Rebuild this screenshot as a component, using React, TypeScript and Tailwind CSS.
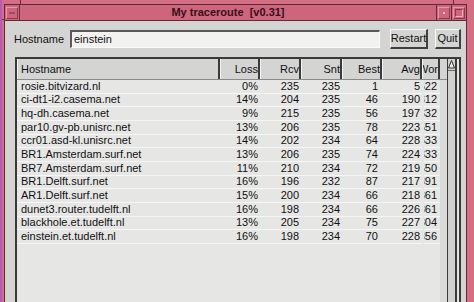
import React from "react";

type Row = [string, string, string, string, string, string, string];

const rows: Row[] = [
  ["rosie.bitvizard.nl", "0%", "235", "235", "1", "5", "522"],
  ["ci-dt1-i2.casema.net", "14%", "204", "235", "46", "190", "312"],
  ["hq-dh.casema.net", "9%", "215", "235", "56", "197", "332"],
  ["par10.gv-pb.unisrc.net", "13%", "206", "235", "78", "223", "551"],
  ["ccr01.asd-kl.unisrc.net", "14%", "202", "234", "64", "228", "633"],
  ["BR1.Amsterdam.surf.net", "13%", "206", "235", "74", "224", "333"],
  ["BR7.Amsterdam.surf.net", "11%", "210", "234", "72", "219", "550"],
  ["BR1.Delft.surf.net", "16%", "196", "232", "87", "217", "391"],
  ["AR1.Delft.surf.net", "15%", "200", "234", "66", "218", "361"],
  ["dunet3.router.tudelft.nl", "16%", "198", "234", "66", "226", "361"],
  ["blackhole.et.tudelft.nl", "13%", "205", "234", "75", "227", "304"],
  ["einstein.et.tudelft.nl", "16%", "198", "234", "70", "228", "356"],
];

const widths = ["w-[40px]", "w-[41px]", "w-[41px]", "w-[40px]", "w-[40px]"];
const heads = ["Loss", "Rcv", "Snt", "Best", "Avg"];

function HeadCell({ w, label }: { w: string; label: string }) {
  return (
    <div
      className={`${w} h-full shrink-0 flex items-center justify-end overflow-hidden border-l border-l-[#f4f4f4] border-r-2 border-r-[#3a3a3a] bg-[#d4d4d2]`}
    >
      <span className="shrink-0">{label}</span>
    </div>
  );
}

export default function App() {
  return (
    <div className="w-[474px] h-[302px] overflow-hidden bg-[#b45cb4] pl-[2px] flex font-['Liberation_Sans',Arial,sans-serif] text-[11px] text-[#111]">
      <div className="flex-1 flex flex-col bg-[#d46e84] pt-[4px] pl-[2px] pr-[7px] relative">
        {/* corner handle marks */}
        <div className="absolute left-[18px] top-0 w-px h-[5px] bg-[#6a2c3a]" />
        <div className="absolute left-[451px] top-0 w-px h-[5px] bg-[#6a2c3a]" />
        <div className="absolute left-0 top-[19px] w-[3px] h-px bg-[#6a2c3a]" />
        <div className="flex-1 flex flex-col border-l border-t border-r border-[#5e2a36]">
          {/* title bar */}
          <div className="h-[15px] flex bg-[#cd667c] border-b border-[#5e2a36] box-content">
            <div className="w-[15px] h-full border-r border-r-[#6a2c3a] flex items-center justify-center">
              <div className="w-[12px] h-[12px] border-t border-l border-[#e898a8] border-r border-b border-r-[#8a3c4c] border-b-[#8a3c4c] flex items-center justify-center">
                <div className="w-[6px] h-[2px] bg-[#a24a5e]" />
              </div>
            </div>
            <div className="flex-1 flex items-center justify-center font-bold text-[11px] text-[#3a0e18] whitespace-pre leading-none">
              My traceroute  [v0.31]
            </div>
            <div className="w-[15px] h-full border-l border-l-[#6a2c3a] flex items-center justify-center">
              <div className="w-[12px] h-[12px] border-t border-l border-[#e898a8] border-r border-b border-r-[#8a3c4c] border-b-[#8a3c4c] flex items-center justify-center">
                <div className="w-[2px] h-[2px] bg-[#f0c0c8]" />
              </div>
            </div>
            <div className="w-[15px] h-full border-l border-l-[#6a2c3a] flex items-center justify-center">
              <div className="w-[12px] h-[12px] border-t border-l border-[#e898a8] border-r border-b border-r-[#8a3c4c] border-b-[#8a3c4c] flex items-center justify-center">
                <div className="w-[8px] h-[8px] border border-t-[#8a3c4c] border-l-[#8a3c4c] border-r-[#f0b0bc] border-b-[#f0b0bc]" />
              </div>
            </div>
          </div>

          {/* body */}
          <div className="flex-1 flex flex-col bg-[#d4d4d2] pt-[8px]">
            <div className="flex items-center h-[20px] pl-[9px]">
              <div className="w-[56px] shrink-0 text-[11px]">Hostname</div>
              <div className="w-[310px] h-[18px] shrink-0 bg-[#f2f2f0] border-t-2 border-l-2 border-t-[#5a5a5a] border-l-[#5a5a5a] border-b border-r border-b-[#fafafa] border-r-[#fafafa] flex items-center pl-[2px]">
                einstein
              </div>
              <div className="ml-[10px] w-[38px] h-[20px] shrink-0 bg-[#d4d4d2] border-t border-l border-t-[#f8f8f8] border-l-[#f8f8f8] border-b-2 border-r-2 border-b-[#404040] border-r-[#404040] flex items-center justify-center">
                Restart
              </div>
              <div className="ml-[7px] w-[26px] h-[20px] shrink-0 bg-[#d4d4d2] border-t border-l border-t-[#f8f8f8] border-l-[#f8f8f8] border-b-2 border-r-2 border-b-[#404040] border-r-[#404040] flex items-center justify-center">
                Quit
              </div>
            </div>

            {/* table frame */}
            <div className="mt-[8px] ml-[10px] w-[446px] flex-1 flex border-t-2 border-l-2 border-[#3a3a3a]">
              <div className="w-[430px] shrink-0 flex flex-col">
                {/* header */}
                <div className="h-[21px] flex border-b border-b-[#8a8a8a]">
                  <div className="w-[203px] h-full shrink-0 flex items-center pl-[3px] border-l border-l-[#f4f4f4] border-r-2 border-r-[#3a3a3a] bg-[#d4d4d2]">
                    Hostname
                  </div>
                  {heads.map((h, i) => (
                    <HeadCell key={h} w={widths[i]} label={h} />
                  ))}
                  <HeadCell w="w-[18px]" label="Wor" />
                  <div className="w-[7px] h-full shrink-0 bg-[#d4d4d2]" />
                </div>
                {/* rows */}
                <div className="flex-1 flex bg-[#e6e6e5]">
                  <div className="w-[405px] shrink-0 flex flex-col">
                    {rows.map((r) => (
                      <div
                        key={r[0]}
                        className="h-[13.67px] flex items-center border-b border-b-[#f6f6f6] leading-none"
                      >
                        <div className="w-[203px] shrink-0 pl-[4px] whitespace-nowrap">{r[0]}</div>
                        <div className="w-[40px] shrink-0 text-right pr-[2px]">{r[1]}</div>
                        <div className="w-[41px] shrink-0 text-right pr-[2px]">{r[2]}</div>
                        <div className="w-[41px] shrink-0 text-right pr-[2px]">{r[3]}</div>
                        <div className="w-[40px] shrink-0 text-right pr-[4px]">{r[4]}</div>
                        <div className="w-[40px] shrink-0 text-right pr-[2px]">{r[5]}</div>
                      </div>
                    ))}
                  </div>
                  <div className="w-[18px] shrink-0 flex flex-col pl-[2px]">
                    {rows.map((r) => (
                      <div
                        key={r[0]}
                        className="h-[13.67px] flex items-center justify-end overflow-hidden pr-[3px] border-b border-b-[#f6f6f6] leading-none"
                      >
                        <span className="shrink-0">{r[6]}</span>
                      </div>
                    ))}
                  </div>
                  <div className="w-[7px] shrink-0 bg-[#dadad8]" />
                </div>
              </div>
              {/* scrollbar */}
              <div className="w-[14px] shrink-0 flex border-l border-l-[#3a3a3a]">
                <div className="w-[9px] flex flex-col bg-[#d0d0ce] border-r-2 border-r-[#3a3a3a]">
                  <div className="h-[12px] flex items-start justify-center pt-[1px] border-b border-b-[#6a6a6a]">
                    <svg width="7" height="9" viewBox="0 0 7 9">
                      <path d="M3.5 0.5 L6.5 8 L0.5 8 Z" fill="#e8e8e8" stroke="#333" strokeWidth="1" />
                    </svg>
                  </div>
                </div>
                <div className="w-[2px] bg-[#e6e6e4]" />
                <div className="w-[2px] bg-[#3a3a3a]" />
              </div>
            </div>
          </div>
        </div>
      </div>
    </div>
  );
}
